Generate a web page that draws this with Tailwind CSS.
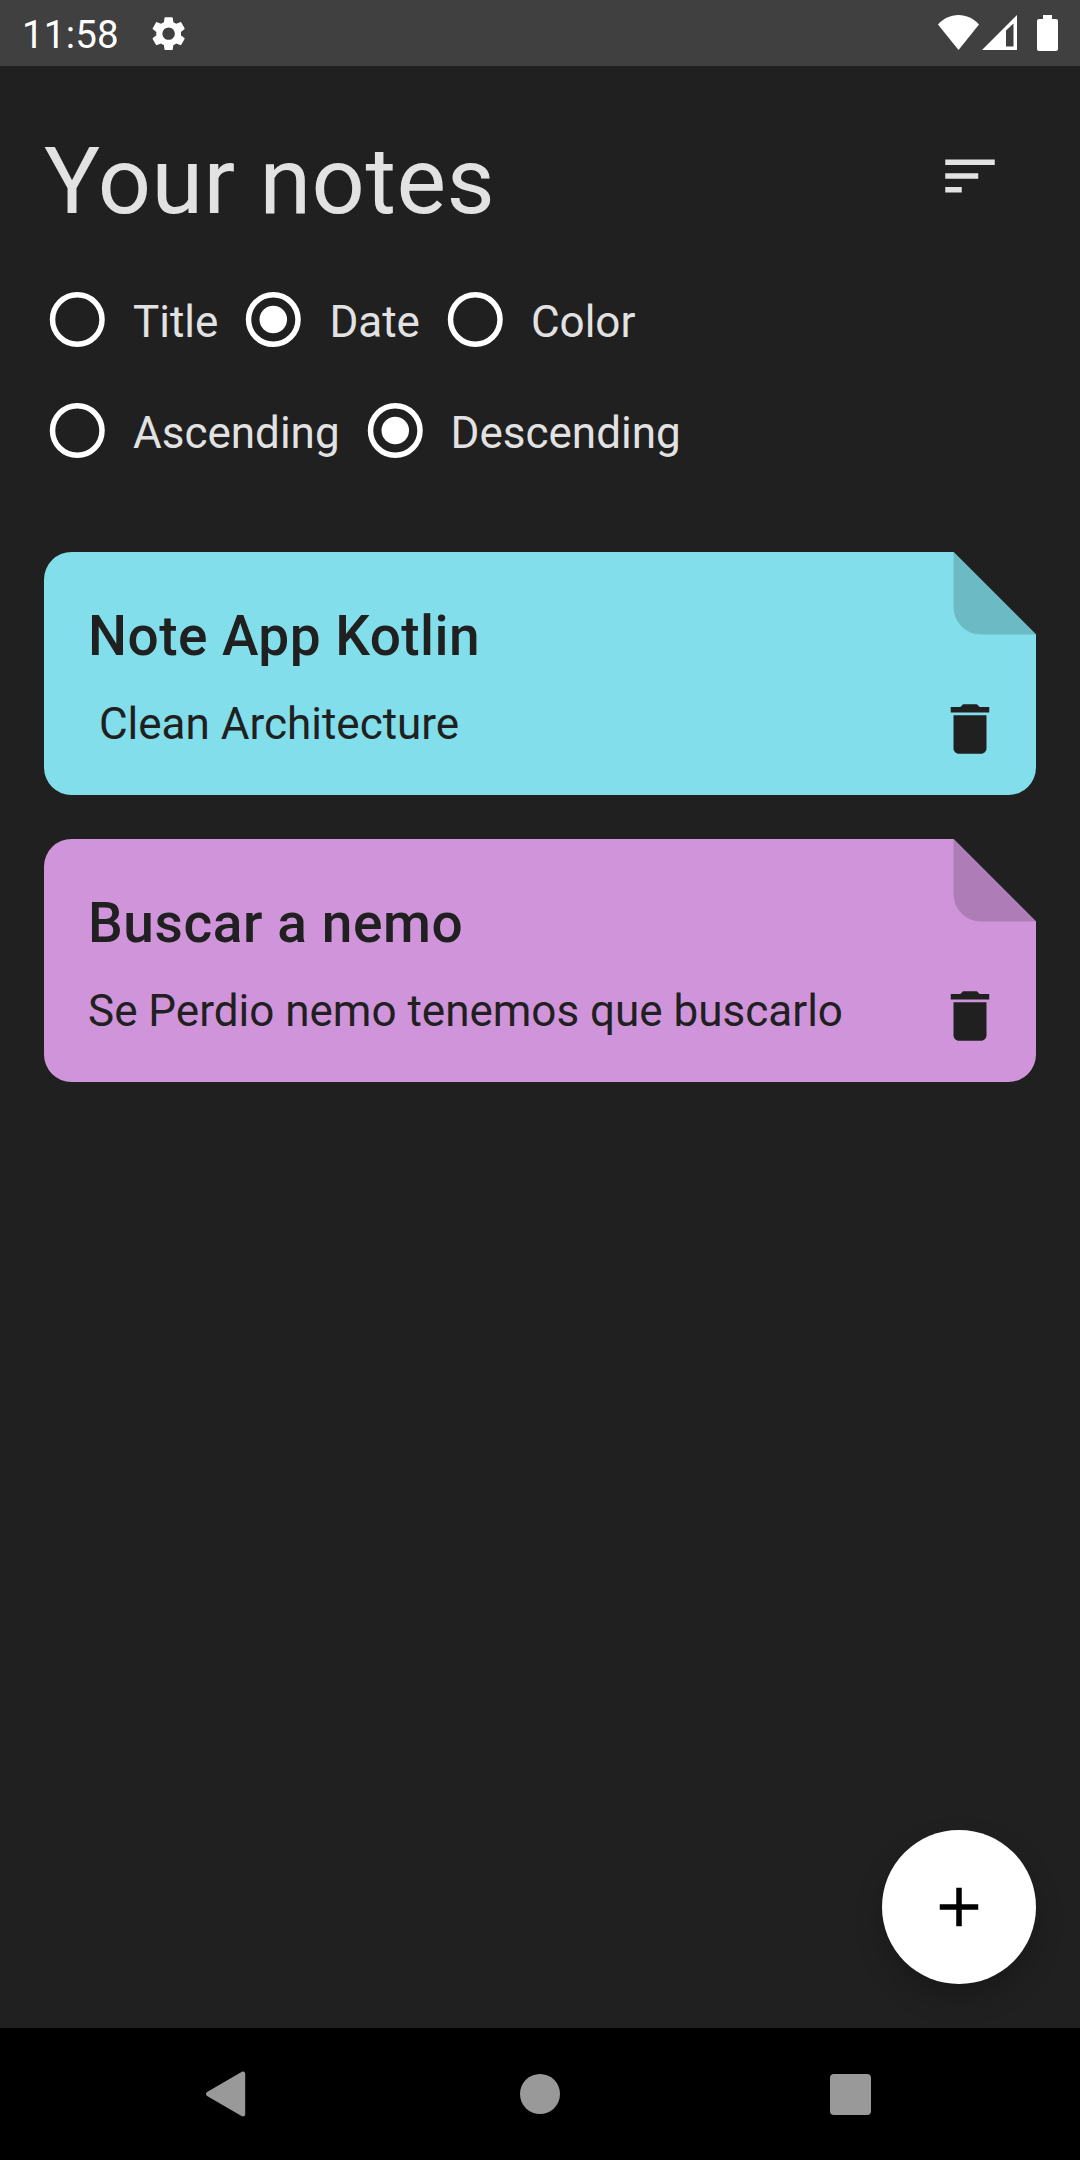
<!DOCTYPE html>
<html lang="en">
<head>
<meta charset="utf-8">
<title>Your notes</title>
<script src="https://cdn.jsdelivr.net/npm/@tailwindcss/browser@4"></script>
</head>
<body class="flex h-[2160px] w-[1080px] flex-col overflow-hidden bg-[#202020] font-[Roboto,sans-serif] text-[#e2e2e2]">
  <!-- Status bar -->
  <header class="flex h-[66px] shrink-0 items-center justify-between bg-[#404040] pl-[22px] pr-[22px] text-white">
    <div class="flex items-center">
      <span class="w-[126px] pt-1 text-[38.5px] leading-[66px] tracking-[0.2px]">11:58</span>
      <svg class="mt-px size-[41.25px]" viewBox="0 0 24 24" fill="currentColor"><path d="M19.14 12.94c.04-.3.06-.61.06-.94 0-.32-.02-.64-.07-.94l2.03-1.58c.18-.14.23-.41.12-.61l-1.92-3.32c-.12-.22-.37-.29-.59-.22l-2.39.96c-.5-.38-1.03-.7-1.62-.94l-.36-2.54c-.04-.24-.24-.41-.48-.41h-3.84c-.24 0-.43.17-.47.41l-.36 2.54c-.59.24-1.13.57-1.62.94l-2.39-.96c-.22-.08-.47 0-.59.22L2.74 8.87c-.12.21-.08.47.12.61l2.03 1.58c-.05.3-.09.63-.09.94s.02.64.07.94l-2.03 1.58c-.18.14-.23.41-.12.61l1.92 3.32c.12.22.37.29.59.22l2.39-.96c.5.38 1.03.7 1.62.94l.36 2.54c.05.24.24.41.48.41h3.84c.24 0 .44-.17.47-.41l.36-2.54c.59-.24 1.13-.56 1.62-.94l2.39.96c.22.08.47 0 .59-.22l1.92-3.32c.12-.22.07-.47-.12-.61l-2.01-1.58zM12 15.6c-1.98 0-3.6-1.62-3.6-3.6s1.62-3.6 3.6-3.6 3.6 1.62 3.6 3.6-1.62 3.6-3.6 3.6z"/></svg>
    </div>
    <div class="flex h-[36px]">
      <svg class="h-[36px] w-[41px]" viewBox="0 0 41 36" fill="currentColor"><path d="M20.5 35 0 9.5C5.500 3.500 12.500 0 20.500 0S35.500 3.500 41 9.500z"/></svg>
      <svg class="ml-[3px] h-[36px] w-[35px]" viewBox="0 0 35 36" fill="currentColor" fill-rule="evenodd"><path d="M0 35 35 0v35zM24 15.500V31.500h7.500V8.500z"/></svg>
      <svg class="ml-5 h-[36px] w-[21px]" viewBox="0 0 21 36" fill="currentColor"><path d="M6 0h9v4h4a2 2 0 0 1 2 2v28a2 2 0 0 1-2 2H2a2 2 0 0 1-2-2V6a2 2 0 0 1 2-2h4z"/></svg>
    </div>
  </header>

  <main class="flex grow flex-col px-11 pt-[44px]">
    <div class="flex h-[132px] items-center justify-between">
      <h1 class="pt-[10px] text-[93.5px] leading-[132px] tracking-[0.5px]">Your notes</h1>
      <button class="flex size-[132px] items-center justify-center" aria-label="Sort">
        <svg class="size-[66px]" viewBox="0 0 24 24" fill="currentColor"><path d="M3 18h6v-2H3v2zM3 6v2h18V6H3zm0 7h12v-2H3v2z"/></svg>
      </button>
    </div>

    <!-- Ordering options -->
    <div class="mt-[44px] flex flex-col gap-[45px] text-[44px] leading-[66px]">
      <div class="flex h-[66px] gap-[22px]">
        <svg class="size-[66px]" viewBox="0 0 24 24"><circle cx="12.100" cy="12.200" r="9" fill="none" stroke="#fff" stroke-width="2"/></svg>
        <span class="pt-[3px] pl-px">Title</span>
        <svg class="size-[66px]" viewBox="0 0 24 24"><circle cx="12.100" cy="12.200" r="9" fill="none" stroke="#fff" stroke-width="2"/><circle cx="12.100" cy="12.200" r="5" fill="#fff"/></svg>
        <span class="pt-[3px] pl-px">Date</span>
        <svg class="size-[66px]" viewBox="0 0 24 24"><circle cx="12.100" cy="12.200" r="9" fill="none" stroke="#fff" stroke-width="2"/></svg>
        <span class="pt-[3px] pl-px">Color</span>
      </div>
      <div class="flex h-[66px] gap-[22px]">
        <svg class="size-[66px]" viewBox="0 0 24 24"><circle cx="12.100" cy="12.200" r="9" fill="none" stroke="#fff" stroke-width="2"/></svg>
        <span class="pt-[3px] pl-px">Ascending</span>
        <svg class="size-[66px]" viewBox="0 0 24 24"><circle cx="12.100" cy="12.200" r="9" fill="none" stroke="#fff" stroke-width="2"/><circle cx="12.100" cy="12.200" r="5" fill="#fff"/></svg>
        <span class="pt-[3px] pl-px">Descending</span>
      </div>
    </div>

    <!-- Notes -->
    <div class="mt-[89px] flex flex-col gap-11 text-[#202020]">
      <article class="relative h-[243px] p-11">
        <svg class="absolute inset-0 h-[243px] w-[992px]" viewBox="0 0 992 243"><path fill="#81deea" d="M27.500 0H909.500L992 82.500V215.500A27.500 27.500 0 0 1 964.500 243H27.500A27.500 27.500 0 0 1 0 215.500V27.500A27.500 27.500 0 0 1 27.500 0z"/><path fill="#6cbac4" d="M909.500 0 992 82.500H937A27.500 27.500 0 0 1 909.500 55z"/></svg>
        <div class="relative">
          <h2 class="pt-[7px] text-[55px] leading-[66px] font-medium tracking-[0.45px]">Note App Kotlin</h2>
          <p class="mt-[22px] text-[44px] leading-[66px] whitespace-pre"> Clean Architecture</p>
        </div>
        <button class="absolute right-0 bottom-0 flex size-[132px] items-center justify-center" aria-label="Delete note">
          <svg class="size-[66px]" viewBox="0 0 24 24" fill="currentColor"><path d="M6 19c0 1.100.9 2 2 2h8c1.100 0 2-.9 2-2V7H6v12zM19 4h-3.500l-1-1h-5l-1 1H5v2h14V4z"/></svg>
        </button>
      </article>
      <article class="relative h-[243px] p-11">
        <svg class="absolute inset-0 h-[243px] w-[992px]" viewBox="0 0 992 243"><path fill="#cf94da" d="M27.500 0H909.500L992 82.500V215.500A27.500 27.500 0 0 1 964.500 243H27.500A27.500 27.500 0 0 1 0 215.500V27.500A27.500 27.500 0 0 1 27.500 0z"/><path fill="#ae7cb7" d="M909.500 0 992 82.500H937A27.500 27.500 0 0 1 909.500 55z"/></svg>
        <div class="relative">
          <h2 class="pt-[7px] text-[55px] leading-[66px] font-medium tracking-[0.6px]">Buscar a nemo</h2>
          <p class="mt-[22px] text-[44px] leading-[66px] whitespace-pre">Se Perdio nemo tenemos que buscarlo</p>
        </div>
        <button class="absolute right-0 bottom-0 flex size-[132px] items-center justify-center" aria-label="Delete note">
          <svg class="size-[66px]" viewBox="0 0 24 24" fill="currentColor"><path d="M6 19c0 1.100.9 2 2 2h8c1.100 0 2-.9 2-2V7H6v12zM19 4h-3.500l-1-1h-5l-1 1H5v2h14V4z"/></svg>
        </button>
      </article>
    </div>

    <button class="mt-auto mb-11 flex size-[154px] items-center justify-center self-end rounded-full bg-white text-black shadow-[0_14px_28px_rgba(0,0,0,0.22)]" aria-label="Add note">
      <svg class="size-[66px]" viewBox="0 0 24 24" fill="currentColor"><path d="M19 13h-6v6h-2v-6H5v-2h6V5h2v6h6v2z"/></svg>
    </button>
  </main>

  <!-- System navigation -->
  <nav class="flex h-[132px] shrink-0 items-center justify-between bg-black pl-[206px] pr-[209px] text-[#999]">
    <svg class="h-[46px] w-[40px]" viewBox="0 0 40 46" fill="currentColor"><path d="M1.500 20.700 35.500 1C37.500 0 39.200 1 39.200 3v40c0 2-1.700 3-3.700 2L1.500 25.300c-2-1.300-2-3.300 0-4.600z"/></svg>
    <span class="ml-[3px] size-10 rounded-full bg-[#999]"></span>
    <span class="mt-px size-[41px] rounded-[4px] bg-[#999]"></span>
  </nav>
</body>
</html>
